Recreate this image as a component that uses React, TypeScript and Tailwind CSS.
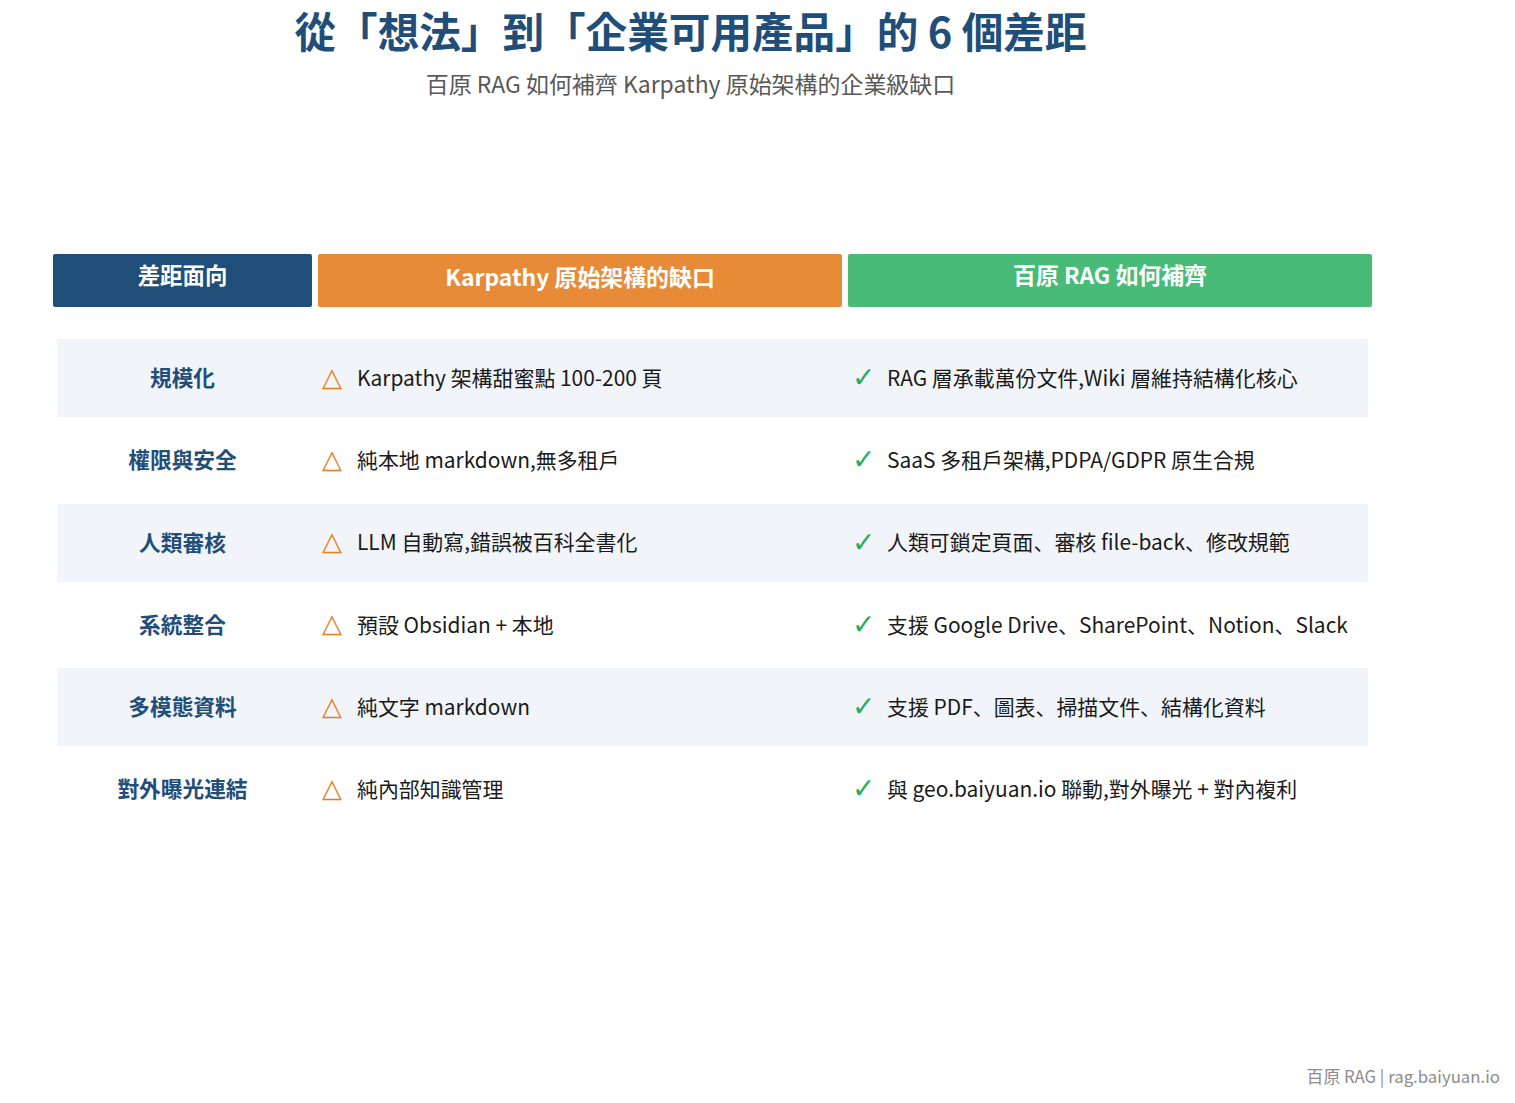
const rows = [
  { name: "規模化", gap: "Karpathy 架構甜蜜點 100-200 頁", fix: "RAG 層承載萬份文件,Wiki 層維持結構化核心" },
  { name: "權限與安全", gap: "純本地 markdown,無多租戶", fix: "SaaS 多租戶架構,PDPA/GDPR 原生合規" },
  { name: "人類審核", gap: "LLM 自動寫,錯誤被百科全書化", fix: "人類可鎖定頁面、審核 file-back、修改規範" },
  { name: "系統整合", gap: "預設 Obsidian + 本地", fix: "支援 Google Drive、SharePoint、Notion、Slack" },
  { name: "多模態資料", gap: "純文字 markdown", fix: "支援 PDF、圖表、掃描文件、結構化資料" },
  { name: "對外曝光連結", gap: "純內部知識管理", fix: "與 geo.baiyuan.io 聯動,對外曝光 + 對內複利" },
];

const App = () => {
  return (
    <div className="flex h-[1103px] w-[1515px] flex-col overflow-hidden bg-white font-['Noto_Sans_CJK_JP',sans-serif]">
      <div className="w-[1381px] text-center">
        <h1 className="mt-[2px] h-[56px] text-[41.6px] leading-[56px] font-bold text-[#1f4e79]">
          從「想法」到「企業可用產品」的 6 個差距
        </h1>
        <p className="mt-[7px] h-[36px] text-[22.96px] leading-[36px] text-[#595959]">
          百原 RAG 如何補齊 Karpathy 原始架構的企業級缺口
        </p>
      </div>

      <div className="mt-[153px] ml-[53px] grid w-[1319px] grid-cols-[259px_524px_524px] gap-[6px] font-bold text-white">
        <div className="flex h-[53px] items-center justify-center rounded-[2px] bg-[#1f4e79] pb-[12px] text-[22.4px]">差距面向</div>
        <div className="flex h-[53px] items-center justify-center rounded-[2px] bg-[#e88b38] pb-[8px] text-[22.9px]">Karpathy 原始架構的缺口</div>
        <div className="flex h-[53px] items-center justify-center rounded-[2px] bg-[#48bb78] pb-[12px] text-[22.9px]">百原 RAG 如何補齊</div>
      </div>

      <div className="mt-[32px] ml-[57px] flex w-[1311px] flex-col gap-[4.25px]">
        {rows.map((row, index) => (
          <div
            key={index}
            className={`grid h-[78px] grid-cols-[251px_530px_530px] items-center ${index % 2 === 0 ? "bg-[#f1f5f9]" : "bg-white"}`}
          >
            <div className="pb-[1px] text-center text-[21.7px] font-bold text-[#1f4e79]">{row.name}</div>
            <div className="flex items-center pb-[1px] pl-[14px] text-[20.93px] text-[#1a1a1a]">
              <span className="w-[35px] pb-[2px] font-['DejaVu_Sans',sans-serif] text-[26px] leading-none text-[#e67e22]">△</span>
              <span>{row.gap}</span>
            </div>
            <div className="flex items-center pb-[1px] pl-[14px] text-[20.93px] text-[#1a1a1a]">
              <span className="w-[35px] pt-[1px] font-['DejaVu_Sans',sans-serif] text-[28px] leading-none text-[#27ae60]">✓</span>
              <span>{row.fix}</span>
            </div>
          </div>
        ))}
      </div>

      <div className="mt-auto mb-[14px] pr-[15px] text-right text-[16.8px] text-[#8c8c8c]">百原 RAG | rag.baiyuan.io</div>
    </div>
  );
};

export default App;
